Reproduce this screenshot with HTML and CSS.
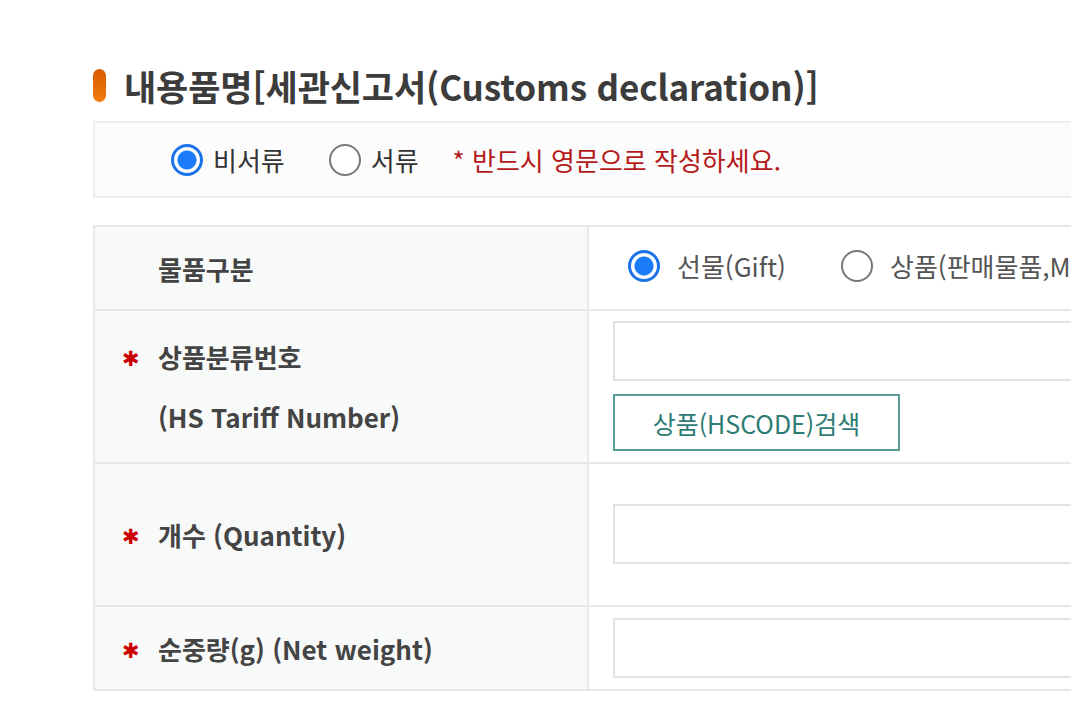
FILE: index.html
```html
<!DOCTYPE html>
<html lang="ko">
<head>
  <meta charset="UTF-8">
  <title>내용품명</title>
  <link rel="stylesheet" href="styles.css">
</head>
<body>
  <div class="section">
    <h2 class="title"><span class="bar"></span>내용품명[세관신고서(Customs declaration)]</h2>

    <div class="doc-type">
      <label class="radio"><span class="dot on"></span>비서류</label>
      <label class="radio"><span class="dot"></span>서류</label>
      <span class="note">* 반드시 영문으로 작성하세요.</span>
    </div>

    <table class="form">
      <tr class="row-kind">
        <th><span class="req"></span>물품구분</th>
        <td>
          <label class="radio"><span class="dot on"></span>선물(Gift)</label>
          <label class="radio"><span class="dot"></span>상품(판매물품,Merchandise)</label>
        </td>
      </tr>
      <tr class="row-hs">
        <th>
          <div class="line"><span class="req">✱</span>상품분류번호</div>
          <div class="line"><span class="req"></span>(HS Tariff Number)</div>
        </th>
        <td>
          <input type="text" class="field">
          <button class="search">상품(HSCODE)검색</button>
        </td>
      </tr>
      <tr class="row-qty">
        <th><span class="req">✱</span>개수 (Quantity)</th>
        <td><input type="text" class="field"></td>
      </tr>
      <tr class="row-weight">
        <th><span class="req">✱</span>순중량(g) (Net weight)</th>
        <td><input type="text" class="field"></td>
      </tr>
    </table>
  </div>
</body>
</html>
```

FILE: styles.css
```css
html, body {
  margin: 0;
  padding: 0;
  overflow: hidden;
}
body {
  font-family: "Noto Sans CJK KR", "Noto Sans", sans-serif;
  background-color: #fff;
  color: #444;
  width: 1071px;
  height: 704px;
}
.section {
  padding: 58px 0 0 93px;
  width: 1400px;
}
.title {
  display: flex;
  align-items: center;
  margin: 0;
  height: 54px;
  font-size: 35px;
  font-weight: 700;
  color: #3c3c3c;
  letter-spacing: -0.1px;
}
.bar {
  display: inline-block;
  width: 13px;
  height: 33px;
  border-radius: 7px;
  background: linear-gradient(#d85a00, #f27c0c);
  margin-right: 18px;
}
.doc-type {
  display: flex;
  align-items: center;
  margin-top: 9px;
  height: 73px;
  border: 2px solid #eeeeee;
  background-color: #fcfcfc;
  padding-left: 76px;
  font-size: 26px;
}
.radio {
  display: inline-flex;
  align-items: center;
  margin-right: 44px;
  color: #333;
}
.doc-type .radio:nth-child(2) {
  margin-right: 34px;
}
.dot {
  box-sizing: border-box;
  width: 32px;
  height: 32px;
  border-radius: 50%;
  border: 2px solid #777;
  margin-right: 10px;
  background-color: #fff;
}
.dot.on {
  border: 3px solid #1a73e8;
  background: radial-gradient(circle, #1a7cf8 0 9px, #fff 10px);
}
.note {
  color: #b41a1a;
}
.form {
  margin-top: 27px;
  border-collapse: collapse;
  border-top: 2px solid #b3c2bf;
  width: 1300px;
  font-size: 26px;
}
.form th, .form td {
  border: 2px solid #e8e8e8;
  text-align: left;
  vertical-align: middle;
}
.form th {
  width: 464px;
  padding-left: 27px;
  background-color: #f8f9f9;
  font-weight: 700;
  color: #444;
}
.form td {
  padding-left: 24px;
  background-color: #fff;
}
.req {
  display: inline-block;
  width: 36px;
  color: #cc0000;
  font-family: "DejaVu Sans", sans-serif;
  font-size: 21px;
  vertical-align: 2px;
}
.row-kind th, .row-kind td {
  height: 80px;
}
.row-kind td {
  padding-left: 39px;
}
.row-kind .radio {
  color: #555;
  font-weight: 400;
}
.row-kind .dot {
  margin-right: 17px;
}
.row-kind .radio:first-child {
  margin-right: 48px;
}
.row-hs td {
  padding-top: 10px;
  padding-bottom: 11px;
}
.line {
  height: 60px;
  line-height: 60px;
}
.field {
  display: block;
  box-sizing: border-box;
  width: 700px;
  height: 60px;
  border: 2px solid #e2e2e2;
  background-color: #fff;
  margin: 0;
}
.search {
  display: block;
  box-sizing: border-box;
  margin-top: 13px;
  width: 287px;
  height: 57px;
  border: 2px solid #5c9c96;
  background-color: #fff;
  color: #2d7c75;
  font-family: inherit;
  font-size: 25px;
  padding: 0;
}
.row-qty td {
  padding-top: 40px;
  padding-bottom: 41px;
}
.row-weight td {
  padding-top: 11px;
  padding-bottom: 11px;
}
```
